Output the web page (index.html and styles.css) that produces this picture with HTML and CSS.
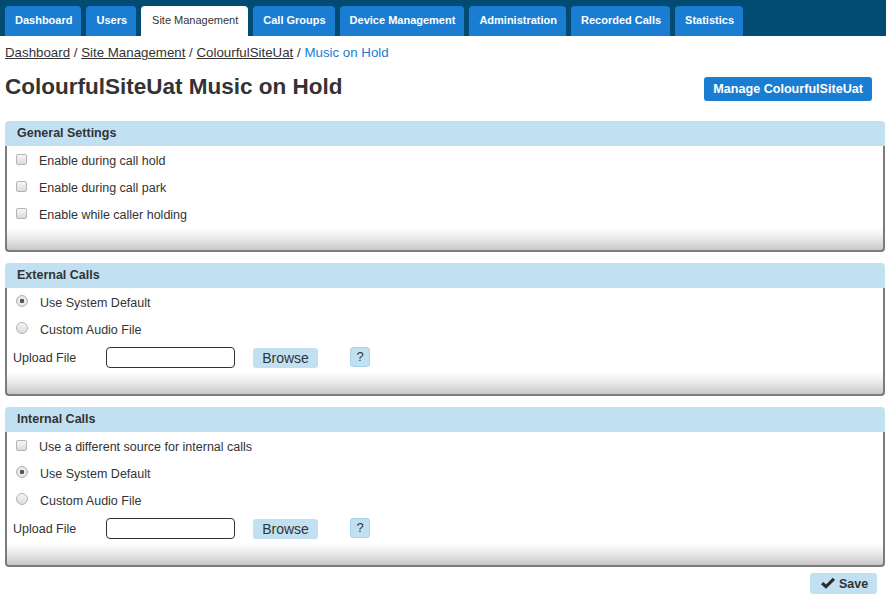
FILE: index.html
```html
<!DOCTYPE html>
<html lang="en">
<head>
    <meta charset="UTF-8">
    <meta name="viewport" content="width=device-width, initial-scale=1.0">
    <title>Music on Hold</title>
    <link rel="stylesheet" href="styles.css">
</head>
<body>
    <nav class="topnav">
        <a class="tab" href="#">Dashboard</a>
        <a class="tab" href="#">Users</a>
        <a class="tab active" href="#">Site Management</a>
        <a class="tab" href="#">Call Groups</a>
        <a class="tab" href="#">Device Management</a>
        <a class="tab" href="#">Administration</a>
        <a class="tab" href="#">Recorded Calls</a>
        <a class="tab" href="#">Statistics</a>
    </nav>

    <div class="content">
        <div class="breadcrumb">
            <a href="#">Dashboard</a> / <a href="#">Site Management</a> / <a href="#">ColourfulSiteUat</a> / <span class="current">Music on Hold</span>
        </div>

        <div class="title-row">
            <h1>ColourfulSiteUat Music on Hold</h1>
            <button class="btn-primary">Manage ColourfulSiteUat</button>
        </div>

        <div class="panel">
            <div class="panel-header">General Settings</div>
            <div class="panel-body">
                <label class="row"><input type="checkbox"><span>Enable during call hold</span></label>
                <label class="row"><input type="checkbox"><span>Enable during call park</span></label>
                <label class="row"><input type="checkbox"><span>Enable while caller holding</span></label>
            </div>
            <div class="panel-footer"></div>
        </div>

        <div class="panel">
            <div class="panel-header">External Calls</div>
            <div class="panel-body">
                <label class="row"><input type="radio" name="ext" checked><span>Use System Default</span></label>
                <label class="row"><input type="radio" name="ext"><span>Custom Audio File</span></label>
                <div class="upload-row">
                    <span class="upload-label">Upload File</span>
                    <input type="text" class="file-name">
                    <button class="btn-light">Browse</button>
                    <button class="btn-help">?</button>
                </div>
            </div>
            <div class="panel-footer"></div>
        </div>

        <div class="panel">
            <div class="panel-header">Internal Calls</div>
            <div class="panel-body">
                <label class="row"><input type="checkbox"><span>Use a different source for internal calls</span></label>
                <label class="row"><input type="radio" name="int" checked><span>Use System Default</span></label>
                <label class="row"><input type="radio" name="int"><span>Custom Audio File</span></label>
                <div class="upload-row">
                    <span class="upload-label">Upload File</span>
                    <input type="text" class="file-name">
                    <button class="btn-light">Browse</button>
                    <button class="btn-help">?</button>
                </div>
            </div>
            <div class="panel-footer"></div>
        </div>

        <div class="actions">
            <button class="btn-save">
                <svg width="16" height="13" viewBox="0 0 16 13"><path d="M1 7.2 L3.4 4.9 L6 7.4 L12.8 0.8 L15 3 L6 11.8 Z" fill="#2b2b2b"/></svg>
                Save
            </button>
        </div>
    </div>
</body>
</html>
```

FILE: styles.css
```css
body {
    font-family: 'Liberation Sans', Arial, sans-serif;
    color: #333;
    margin: 0;
    background-color: #fff;
}
.topnav {
    display: flex;
    gap: 5px;
    height: 36px;
    padding: 6px 0 0 5px;
    box-sizing: border-box;
    background-color: #024b73;
}
.tab {
    display: flex;
    align-items: center;
    padding: 0 9px 2px 10px;
    font-size: 11px;
    font-weight: bold;
    color: #fff;
    text-decoration: none;
    background-color: #1a7dd1;
    border-radius: 4px 4px 0 0;
}
.tab.active {
    background-color: #fff;
    color: #333;
    font-weight: normal;
    padding: 0 10px 2px 11px;
}
.content {
    padding: 0 1px 0 5px;
}
.breadcrumb {
    margin-top: 8px;
    font-size: 13.3px;
    line-height: 18px;
}
.breadcrumb a {
    color: #333;
}
.breadcrumb .current {
    color: #1a7dd1;
}
.title-row {
    display: flex;
    justify-content: space-between;
    align-items: flex-start;
    margin-top: 11px;
}
.title-row h1 {
    margin: 0;
    font-size: 22.5px;
    line-height: 27px;
    font-weight: bold;
}
.btn-primary {
    margin: 4px 13px 0 0;
    height: 24px;
    padding: 0 9px;
    border: none;
    border-radius: 3px;
    background-color: #1a7dd1;
    color: #fff;
    font-family: inherit;
    font-size: 12.6px;
    font-weight: bold;
}
.panel {
    margin-top: 20px;
}
.panel + .panel {
    margin-top: 11px;
}
.panel-header {
    height: 25px;
    line-height: 25px;
    padding-left: 12px;
    font-size: 12.5px;
    font-weight: bold;
    background-color: #c1e1f2;
    border-radius: 4px 4px 0 0;
}
.panel-body {
    padding-top: 1px;
    border-left: 2px solid #7b7b7b;
    border-right: 2px solid #7b7b7b;
}
.panel-footer {
    height: 22px;
    border: 2px solid #7b7b7b;
    border-top: none;
    border-radius: 0 0 4px 4px;
    background: linear-gradient(#fff 0%, #f0f0f0 35%, #c8c8c8 100%);
}
.row {
    display: flex;
    align-items: center;
    height: 27px;
    padding-left: 9px;
    font-size: 12.5px;
}
.row span {
    margin-left: 12px;
}
.row input {
    appearance: none;
    width: 11px;
    height: 11px;
    margin: -3px 0 0 0;
    border: 1px solid #b3b3b3;
    background: linear-gradient(#f6f6f6, #dcdcdc);
}
.row input[type="checkbox"] {
    border-radius: 2px;
}
.row input[type="radio"] {
    border-radius: 50%;
    width: 12px;
    height: 12px;
}
.row input[type="radio"]:checked {
    background: radial-gradient(circle, #555 0, #555 2px, #ececec 2.5px, #dcdcdc 100%);
}
.upload-row {
    display: flex;
    align-items: center;
    height: 29px;
    padding-left: 6px;
    font-size: 12.5px;
}
.upload-label {
    width: 93px;
}
.file-name {
    width: 129px;
    height: 21px;
    box-sizing: border-box;
    margin: 0;
    border: 1px solid #333;
    border-radius: 4px;
}
.btn-light {
    margin-left: 18px;
    width: 65px;
    height: 20px;
    padding: 0;
    border: none;
    border-radius: 3px;
    background-color: #c1e1f2;
    color: #333;
    font-family: inherit;
    font-size: 14px;
}
.btn-help {
    margin: -2px 0 0 32px;
    width: 20px;
    height: 20px;
    padding: 0;
    border: 1px solid #a9d3ea;
    border-radius: 3px;
    background-color: #c1e1f2;
    color: #333;
    font-family: inherit;
    font-size: 13px;
}
.actions {
    display: flex;
    justify-content: flex-end;
    margin-top: 6px;
    padding-right: 8px;
}
.btn-save {
    display: flex;
    align-items: center;
    gap: 3px;
    height: 21px;
    width: 67px;
    padding: 0 0 0 10px;
    border: none;
    border-radius: 3px;
    background-color: #c1e1f2;
    color: #333;
    font-family: inherit;
    font-size: 12.5px;
    font-weight: bold;
}
```
